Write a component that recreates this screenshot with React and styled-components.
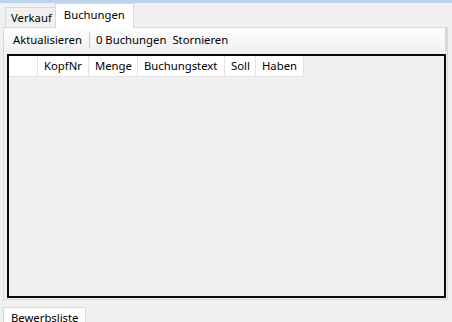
import React from "react";
import styled, { createGlobalStyle } from "styled-components";

const Global = createGlobalStyle`
  html, body { margin: 0; padding: 0; background: #f0f0f0; }
  body { font-family: "Noto Sans", "Segoe UI", sans-serif; font-size: 11.3px; color: #000; }
  #root { width: 452px; height: 322px; overflow: hidden; }
`;

const Window = styled.div`
  width: 452px;
  height: 322px;
  display: flex;
  flex-direction: column;
  background: #f0f0f0;
`;

const TopStrip = styled.div`
  height: 3px;
  background: #bcd3ec;
  flex: none;
`;

const TabStrip = styled.div`
  display: flex;
  align-items: flex-end;
  height: 25px;
  padding-left: 5px;
  flex: none;
`;

const Tab = styled.div`
  box-sizing: border-box;
  height: ${(p) => (p.$active ? "25px" : "21px")};
  padding: ${(p) => (p.$active ? "3px 8px 0 8px" : "2px 3px 0 5px")};
  background: ${(p) => (p.$active ? "#ffffff" : "#f0f0f0")};
  border: 1px solid #d9d9d9;
  border-bottom: ${(p) => (p.$active ? "none" : "1px solid #d9d9d9")};
  margin-left: ${(p) => (p.$active ? "-1px" : "0")};
  line-height: 16px;
  white-space: nowrap;
  position: relative;
  z-index: ${(p) => (p.$active ? 1 : 0)};
`;

const TabPage = styled.div`
  box-sizing: border-box;
  margin: -1px 4px 0 3px;
  height: 273px;
  border: 1px solid #d9d9d9;
  background: #f0f0f0;
  display: flex;
  flex-direction: column;
  flex: none;
`;

const Toolbar = styled.div`
  box-sizing: border-box;
  height: 24px;
  display: flex;
  align-items: center;
  padding: 0 6px 0 8px;
  background: linear-gradient(#fdfdfd, #f1f1f1);
  border-right: 2px solid #d6d6d6;
  flex: none;
`;

const ToolButton = styled.span`
  padding: 0 1px;
  line-height: 16px;
  white-space: nowrap;
  margin-right: ${(p) => p.$gap || 0}px;
`;

const Separator = styled.span`
  width: 1px;
  height: 16px;
  background: #c8c8c8;
  margin: 0 5px 0 6px;
`;

const Grid = styled.div`
  box-sizing: border-box;
  margin: 2px 1px 1px 3px;
  flex: 1;
  border: 2px solid #0a0a0a;
  background: #f0f0f0;
`;

const HeaderRow = styled.div`
  display: flex;
  height: 21px;
`;

const HeaderCell = styled.div`
  box-sizing: border-box;
  width: ${(p) => p.$w}px;
  height: 21px;
  background: #ffffff;
  border-right: 1px solid #e3e3e3;
  border-bottom: 1px solid #e3e3e3;
  padding-left: 6px;
  line-height: 20px;
  white-space: nowrap;
`;

const BottomStrip = styled.div`
  display: flex;
  padding: 7px 0 0 3px;
  flex: none;
`;

const BottomTab = styled.div`
  box-sizing: border-box;
  height: 20px;
  padding: 2px 7px 0 7px;
  background: #ffffff;
  border: 1px solid #d9d9d9;
  border-bottom: none;
  line-height: 16px;
  white-space: nowrap;
`;

const columns = [
  { label: "", w: 29 },
  { label: "KopfNr", w: 51 },
  { label: "Menge", w: 49 },
  { label: "Buchungstext", w: 87 },
  { label: "Soll", w: 31 },
  { label: "Haben", w: 48 },
];

export default function App() {
  return (
    <Window>
      <Global />
      <TopStrip />
      <TabStrip>
        <Tab>Verkauf</Tab>
        <Tab $active>Buchungen</Tab>
      </TabStrip>
      <TabPage>
        <Toolbar>
          <ToolButton>Aktualisieren</ToolButton>
          <Separator />
          <ToolButton $gap={4}>0 Buchungen</ToolButton>
          <ToolButton>Stornieren</ToolButton>
        </Toolbar>
        <Grid>
          <HeaderRow>
            {columns.map((c, i) => (
              <HeaderCell key={i} $w={c.w}>
                {c.label}
              </HeaderCell>
            ))}
          </HeaderRow>
        </Grid>
      </TabPage>
      <BottomStrip>
        <BottomTab>Bewerbsliste</BottomTab>
      </BottomStrip>
    </Window>
  );
}
